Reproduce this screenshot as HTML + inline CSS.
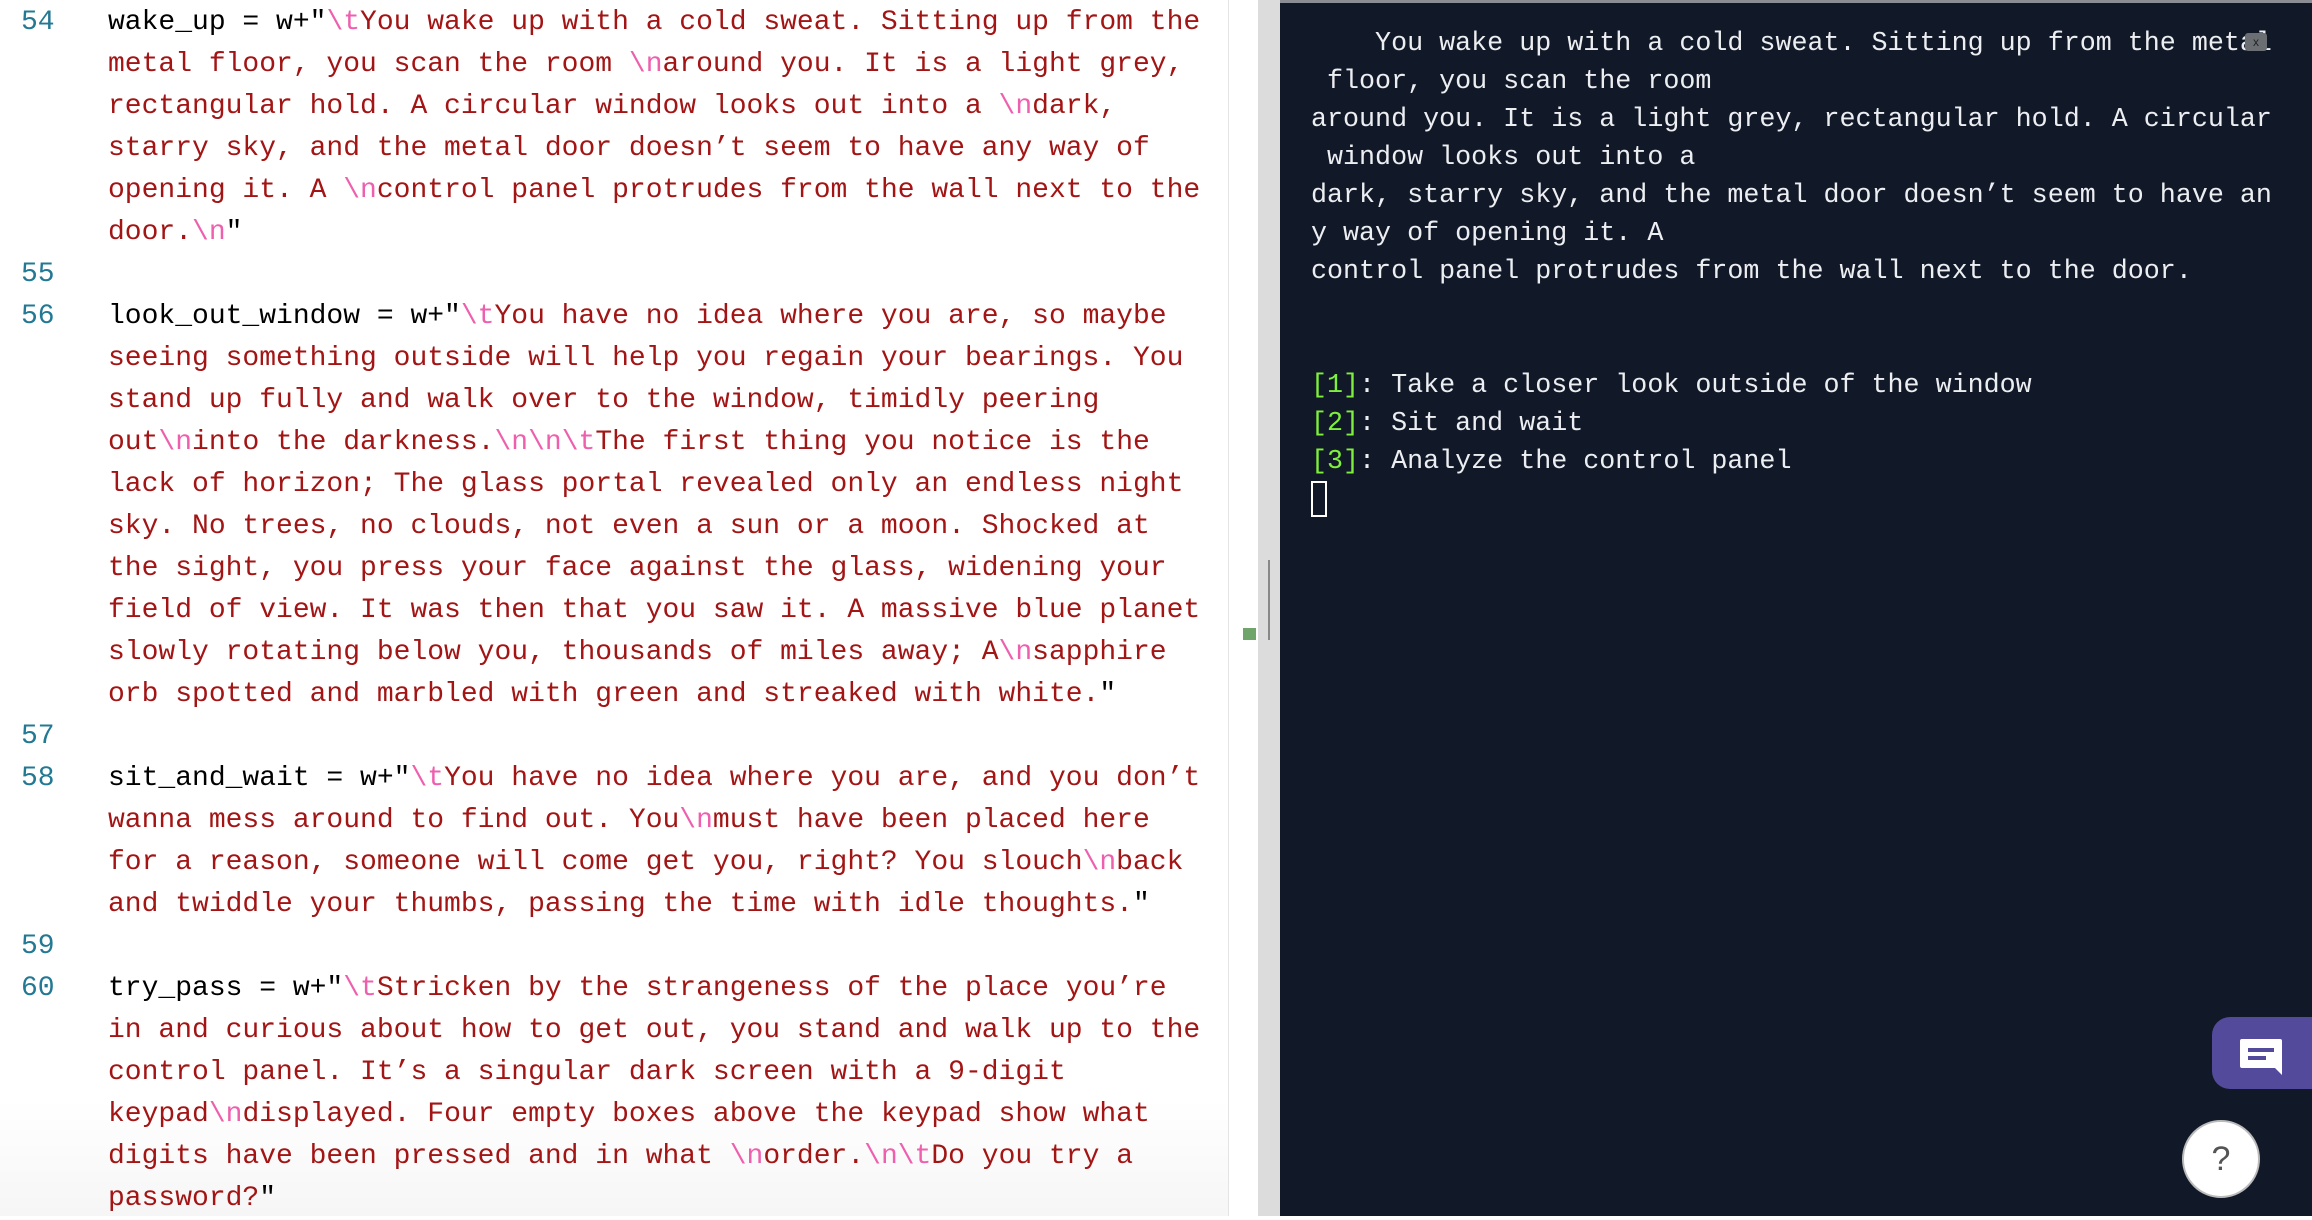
<!DOCTYPE html>
<html><head><meta charset="utf-8"><style>
html,body{margin:0;padding:0;width:2312px;height:1216px;overflow:hidden;background:#fff;}
#ed{position:absolute;left:0;top:0;width:1228px;height:1216px;background:linear-gradient(#fff 0,#fff 1100px,#f6f6f6 1216px);}
.code{position:absolute;left:0;top:2px;font-family:"Liberation Mono",monospace;font-size:28px;line-height:42px;white-space:pre;}
.ln{position:absolute;left:21px;color:#237893;}
.tx{position:absolute;left:108px;color:#a31515;}
.k{color:#000}
.e{color:#ee5fae}
#bord{position:absolute;left:1228px;top:0;width:1px;height:1216px;background:#e4e4e4;}
#strip{position:absolute;left:1229px;top:0;width:29px;height:1216px;background:#fff;}
#mark{position:absolute;left:1243px;top:628px;width:13px;height:12px;background:#6fa56a;}
#gut{position:absolute;left:1258px;top:0;width:22px;height:1216px;background:#dcdcdc;}
#gline{position:absolute;left:1268px;top:560px;width:2px;height:80px;background:#888;}
#term{position:absolute;left:1280px;top:0;width:1032px;height:1216px;background:#111827;}
#ttop{position:absolute;left:1280px;top:0;width:1032px;height:3px;background:#8a8d93;}
.t{position:absolute;left:1311px;top:25px;font-family:"Liberation Mono",monospace;font-size:26.7px;line-height:38px;white-space:pre;color:#eceef2;}
.g{color:#7ef03c}
#cur{position:absolute;left:1311px;top:481px;width:12px;height:32px;border:2px solid #fff;}
#x{position:absolute;left:2245px;top:33px;width:22px;height:18px;background:#6b6e73;border-radius:3px;color:#222;font:12px "Liberation Sans",sans-serif;text-align:center;line-height:18px;}
#chat{position:absolute;left:2212px;top:1017px;width:100px;height:72px;background:#544a9c;border-radius:18px 0 0 18px;}
#help{position:absolute;left:2182px;top:1120px;width:78px;height:78px;border-radius:50%;background:#fff;border:2px solid #bbb;box-sizing:border-box;text-align:center;font:34px/74px "Liberation Sans",sans-serif;color:#555;}
</style></head><body>
<div id="ed"></div>
<div class="code">
<div class="ln" style="top:0">54</div>
<div class="ln" style="top:252px">55</div>
<div class="ln" style="top:294px">56</div>
<div class="ln" style="top:714px">57</div>
<div class="ln" style="top:756px">58</div>
<div class="ln" style="top:924px">59</div>
<div class="ln" style="top:966px">60</div>
<div class="tx" style="top:0"><span class="k">wake_up = w+"</span><span class="e">\t</span>You wake up with a cold sweat. Sitting up from the
metal floor, you scan the room <span class="e">\n</span>around you. It is a light grey,
rectangular hold. A circular window looks out into a <span class="e">\n</span>dark,
starry sky, and the metal door doesn’t seem to have any way of
opening it. A <span class="e">\n</span>control panel protrudes from the wall next to the
door.<span class="e">\n</span><span class="k">"</span>

<span class="k">look_out_window = w+"</span><span class="e">\t</span>You have no idea where you are, so maybe
seeing something outside will help you regain your bearings. You
stand up fully and walk over to the window, timidly peering
out<span class="e">\n</span>into the darkness.<span class="e">\n\n\t</span>The first thing you notice is the
lack of horizon; The glass portal revealed only an endless night
sky. No trees, no clouds, not even a sun or a moon. Shocked at
the sight, you press your face against the glass, widening your
field of view. It was then that you saw it. A massive blue planet
slowly rotating below you, thousands of miles away; A<span class="e">\n</span>sapphire
orb spotted and marbled with green and streaked with white.<span class="k">"</span>

<span class="k">sit_and_wait = w+"</span><span class="e">\t</span>You have no idea where you are, and you don’t
wanna mess around to find out. You<span class="e">\n</span>must have been placed here
for a reason, someone will come get you, right? You slouch<span class="e">\n</span>back
and twiddle your thumbs, passing the time with idle thoughts.<span class="k">"</span>

<span class="k">try_pass = w+"</span><span class="e">\t</span>Stricken by the strangeness of the place you’re
in and curious about how to get out, you stand and walk up to the
control panel. It’s a singular dark screen with a 9-digit
keypad<span class="e">\n</span>displayed. Four empty boxes above the keypad show what
digits have been pressed and in what <span class="e">\n</span>order.<span class="e">\n\t</span>Do you try a
password?<span class="k">"</span></div>
</div>
<div id="bord"></div><div id="strip"></div><div id="mark"></div>
<div id="gut"></div><div id="gline"></div>
<div id="term"></div><div id="ttop"></div>
<div class="t">    You wake up with a cold sweat. Sitting up from the metal
 floor, you scan the room
around you. It is a light grey, rectangular hold. A circular
 window looks out into a
dark, starry sky, and the metal door doesn’t seem to have an
y way of opening it. A
control panel protrudes from the wall next to the door.


<span class="g">[1]</span>: Take a closer look outside of the window
<span class="g">[2]</span>: Sit and wait
<span class="g">[3]</span>: Analyze the control panel</div>
<div id="cur"></div>
<div id="x">x</div>
<div id="chat"><svg width="100" height="72" viewBox="0 0 100 72"><path d="M30 22h38a2 2 0 0 1 2 2v24l0 10-7-7H30a2 2 0 0 1-2-2V24a2 2 0 0 1 2-2z" fill="#fff"/><rect x="36" y="31" width="26" height="4" fill="#544a9c"/><rect x="36" y="39" width="18" height="4" fill="#544a9c"/></svg></div>
<div id="help">?</div>
</body></html>
